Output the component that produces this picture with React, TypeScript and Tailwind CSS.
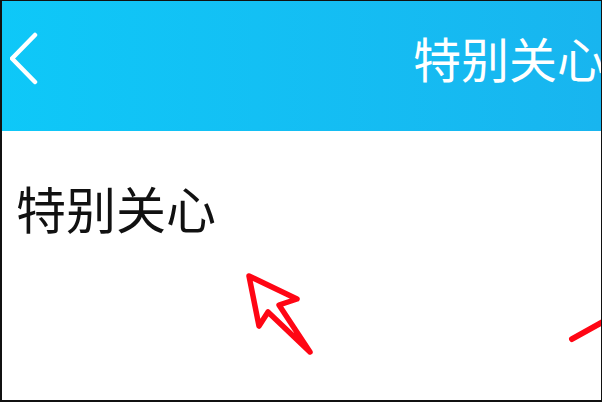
import React from "react";

export default function App() {
  return (
    <div className="relative w-[602px] h-[402px] overflow-hidden bg-white border-l-2 border-b-2 border-t border-r border-[#111]" style={{ fontFamily: '"Noto Sans CJK SC", "Noto Sans", sans-serif' }}>
      <div className="flex items-start h-[130px] overflow-hidden bg-gradient-to-r from-[#0ec8f8] to-[#18b5ef]">
        <svg className="ml-[8px] mt-[31px] shrink-0" width="30" height="54" viewBox="0 0 30 54">
          <polyline points="25,3 2,26.5 25,50" fill="none" stroke="white" strokeWidth="4.5" strokeLinecap="round" strokeLinejoin="round" />
        </svg>
        <div className="ml-[373px] mt-[32px] shrink-0 whitespace-nowrap text-[48px] leading-none text-white">特别关心</div>
      </div>
      <div className="ml-[14px] mt-[51px] text-[50px] leading-none text-[#111]">特别关心</div>
      <svg className="absolute left-0 top-0 pointer-events-none" width="602" height="402" viewBox="0 0 602 402">
        <polygon points="247,275 295,298 277,304 308,351 266,311 257,325" fill="none" stroke="#ff0614" strokeWidth="5.5" strokeLinejoin="round" strokeLinecap="round" />
        <line x1="570" y1="338" x2="606" y2="318" stroke="#ff0614" strokeWidth="6" strokeLinecap="round" />
      </svg>
    </div>
  );
}
